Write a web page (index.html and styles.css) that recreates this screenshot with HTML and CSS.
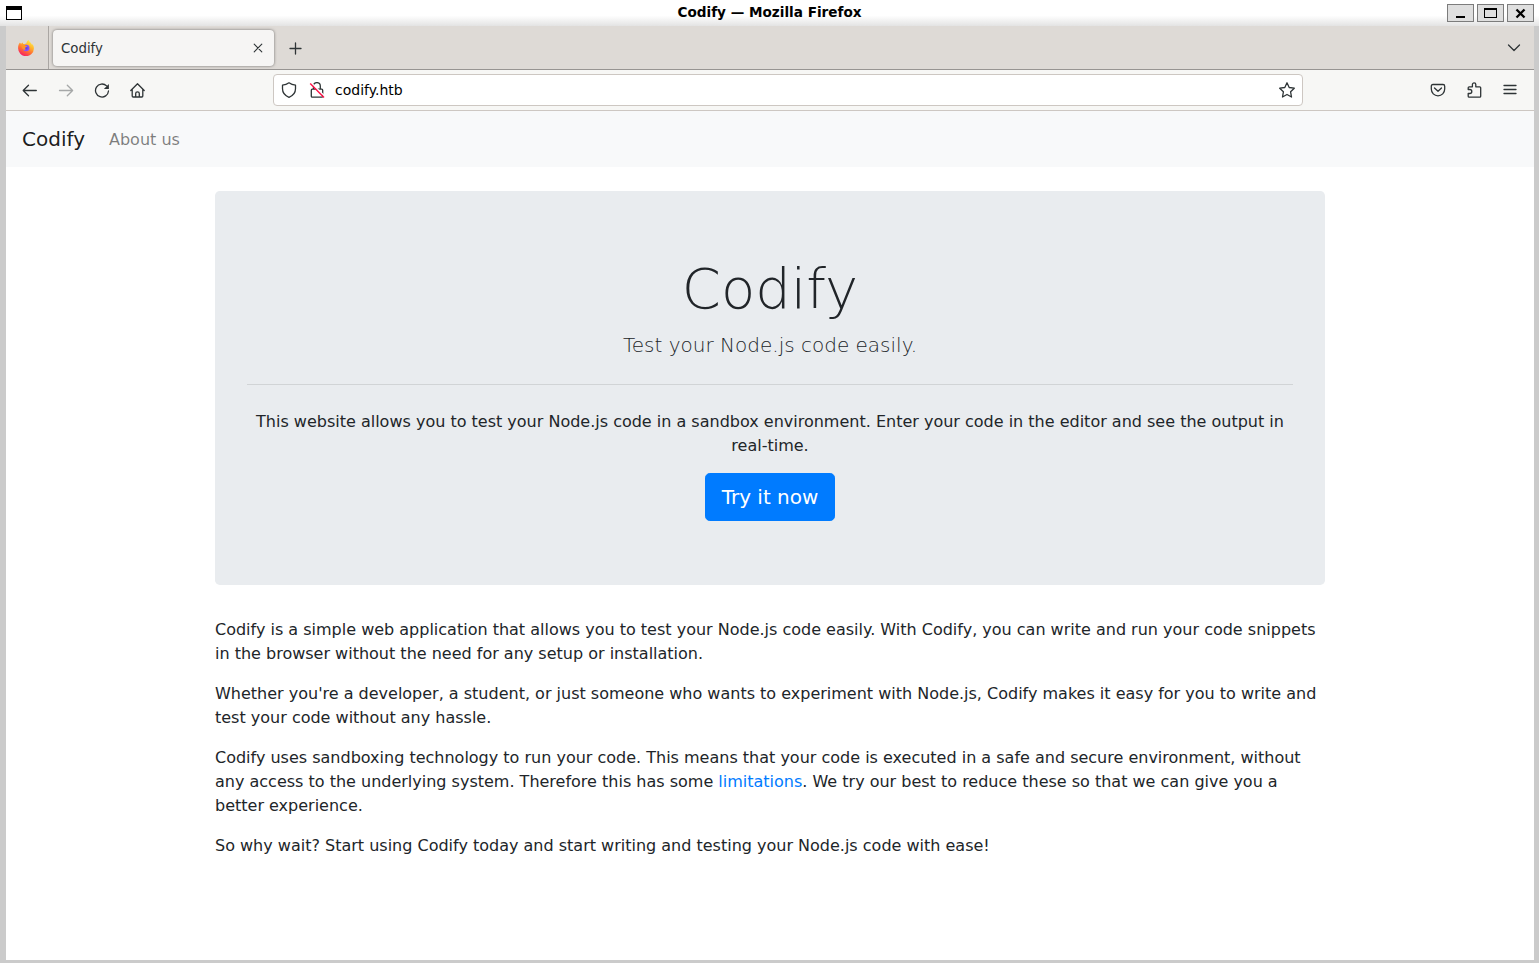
FILE: index.html
```html
<!DOCTYPE html>
<html lang="en">
<head>
<meta charset="utf-8">
<title>Codify</title>
<link rel="stylesheet" href="styles.css">
</head>
<body>
<div class="window">
  <header class="titlebar">
    <svg class="window-menu" width="16" height="14" viewBox="0 0 16 14"><rect width="16" height="14"/><rect x="1" y="4" width="14" height="9" fill="#fff"/></svg>
    <div class="title">Codify — Mozilla Firefox</div>
    <div class="controls">
      <span class="control"><svg width="25" height="16" viewBox="0 0 25 16"><path d="M8 11h9v2H8z"/></svg></span>
      <span class="control"><svg width="25" height="16" viewBox="0 0 25 16"><path d="M6 3h13v10H6zM7 5v7h11V5z" fill-rule="evenodd"/></svg></span>
      <span class="control"><svg width="25" height="16" viewBox="0 0 25 16"><path d="M8.500 4.500l8 8M16.500 4.500l-8 8" stroke="#000" stroke-width="2.300"/></svg></span>
    </div>
  </header>
  <div class="frame">
    <div class="tabs">
      <div class="pinned">
        <svg width="16" height="16" viewBox="0 0 16 16">
          <defs>
            <linearGradient id="flame" x1=".8" y1="0" x2=".25" y2="1"><stop offset="0" stop-color="#fff44f"/><stop offset=".35" stop-color="#ffb52b"/><stop offset=".65" stop-color="#ff6a35"/><stop offset="1" stop-color="#f5156c"/></linearGradient>
            <radialGradient id="globe"><stop offset="0" stop-color="#5b3df0"/><stop offset="1" stop-color="#9059ff"/></radialGradient>
          </defs>
          <path d="M15.500 6c-.4-.9-1.200-1.900-1.800-2.200.3.6.4 1.100.5 1.500C13.300 3 11.600 2.200 10.600 0 8.900 1 8.400 2.600 8.400 3.500c-.9 0-1.700.3-2.400.7-.6-.2-1.100-.7-1.300-1.700-.6.300-1.100.8-1.400 1.300-.7 0-1.100-.5-1.300-1.200C.8 3.800.1 5.600.1 8.100a7.900 7.900 0 0 0 15.800.4c0-.9-.1-1.800-.4-2.500z" fill="url(#flame)"/>
          <circle cx="8.200" cy="8" r="3.300" fill="url(#globe)"/>
          <path d="M3 5.200c1.600-1 3.600-.8 4.700.7h1.600c-.2.900-1.700 1-2 1.500-.3.700-.1 1.600.5 2.200-1.800.6-3.100-.3-3.400-1.400z" fill="#ff9328"/>
        </svg>
      </div>
      <div class="tab"><span>Codify</span><svg width="10" height="10" viewBox="0 0 10 10"><path d="M1.200 1.200l7.600 7.600M8.800 1.200L1.200 8.800" class="line thin"/></svg></div>
      <svg class="new-tab" width="13" height="13" viewBox="0 0 13 13"><path d="M6.500 1v11M1 6.500h11" class="line"/></svg>
      <svg class="all-tabs" width="14" height="8" viewBox="0 0 14 8"><path d="M1.500 1L7 6.500 12.500 1" class="line"/></svg>
    </div>
    <div class="toolbar">
      <div class="nav-buttons">
        <svg width="16" height="16" viewBox="0 0 16 16"><path d="M14.300 8.500H1.200M6.500 3.200L1.200 8.500l5.300 5.300" class="line"/></svg>
        <svg class="disabled" width="16" height="16" viewBox="0 0 16 16"><path d="M1.500 8.500h13M9.300 3.200l5.300 5.300-5.300 5.300" class="line"/></svg>
        <svg width="16" height="16" viewBox="0 0 16 16"><path d="M12.600 3.900A6.500 6.500 0 1 0 14.500 9" class="line"/><path d="M14.900 2v5h-5z" fill="#2e3436"/></svg>
        <svg width="16" height="16" viewBox="0 0 16 16"><path d="M.8 8.500l6.700-6.700 6.700 6.700M2.200 7.200v6.800q0 1 1 1h8.600q1 0 1-1V7.200M5.700 15v-3.500q0-1.600 1.800-1.600t1.800 1.600V15" class="line"/></svg>
      </div>
      <div class="urlbar">
        <svg width="16" height="16" viewBox="0 0 16 16"><path d="M8 .8c2.200 1.500 4.200 2.100 6.500 2.400v3.600c0 3.900-2.700 7-6.500 8.500C4.200 13.800 1.500 10.700 1.500 6.800V3.200C3.800 2.900 5.800 2.300 8 .8z" class="line"/></svg>
        <svg width="16" height="16" viewBox="0 0 16 16"><path d="M4.500 7V4a3.400 3.400 0 0 1 6.800 0v3M3.300 7.200h9.400q1 0 1 1v6q0 1-1 1H3.300q-1 0-1-1v-6q0-1 1-1z" class="line"/><path d="M2.500 1l13.500 13.500" stroke="#fff" stroke-width="1.500"/><path d="M1.200 1.500L15 15.400" stroke="#ff0f45" stroke-width="1.400"/></svg>
        <span class="url">codify.htb</span>
        <svg width="16" height="16" viewBox="0 0 16 16"><path d="M8 .8l2.200 4.700 5.100.7-3.700 3.600.9 5.200L8 12.500 3.500 15l.9-5.200L.7 6.200l5.100-.7z" class="line"/></svg>
      </div>
      <div class="tools">
        <svg width="16" height="16" viewBox="0 0 16 16"><path d="M3 2.500h10q1.700 0 1.700 1.700v2.900a6.700 6.700 0 0 1-13.400 0V4.200Q1.300 2.500 3 2.500zM4.500 6L8 9.300 11.500 6" class="line"/></svg>
        <svg width="16" height="16" viewBox="0 0 16 16"><path d="M2.200 7.500V5.800q0-1 1-1h3.200V2.600a1.700 1.700 0 0 1 3.400 0v2.200h3.900q1 0 1 1v8.400q0 1-1 1H3.200q-1 0-1-1v-2.700h1.600a2 2 0 0 0 0-4z" class="line"/></svg>
        <svg width="16" height="16" viewBox="0 0 16 16"><path d="M2 3.500h12M2 7.500h12M2 11.500h12" class="line"/></svg>
      </div>
    </div>
    <div class="page">
      <nav class="navbar"><a class="brand">Codify</a><a class="nav-link">About us</a></nav>
      <main class="container">
        <section class="jumbotron">
          <h1>Codify</h1>
          <p class="lead">Test your Node.js code easily.</p>
          <hr>
          <p class="intro">This website allows you to test your Node.js code in a sandbox environment. Enter your code in the editor and see the output in real-time.</p>
          <a class="button">Try it now</a>
        </section>
        <p>Codify is a simple web application that allows you to test your Node.js code easily. With Codify, you can write and run your code snippets in the browser without the need for any setup or installation.</p>
        <p>Whether you're a developer, a student, or just someone who wants to experiment with Node.js, Codify makes it easy for you to write and test your code without any hassle.</p>
        <p>Codify uses sandboxing technology to run your code. This means that your code is executed in a safe and secure environment, without any access to the underlying system. Therefore this has some <a class="link">limitations</a>. We try our best to reduce these so that we can give you a better experience.</p>
        <p>So why wait? Start using Codify today and start writing and testing your Node.js code with ease!</p>
      </main>
    </div>
  </div>
</div>
</body>
</html>
```
FILE: styles.css
```css
* { box-sizing: border-box; }
body { margin: 0; font-family: "DejaVu Sans", sans-serif; color: #212529; }
svg { display: block; flex: none; }
.line { fill: none; stroke: #2e3436; stroke-width: 1.3; stroke-linejoin: round; stroke-linecap: round; }
.thin { stroke-width: 1.1; }
.window { height: 963px; display: flex; flex-direction: column; background: #cbcbcb; overflow: hidden; }
.titlebar { height: 26px; flex: none; display: grid; grid-template-columns: 1fr auto 1fr; align-items: center; padding: 0 6px; background: linear-gradient(#fff 60%, #e3e3e3); }
.title { font-size: 13.6px; font-weight: bold; color: #000; line-height: 16px; padding-bottom: 3px; }
.controls { display: flex; justify-content: flex-end; gap: 3px; margin-right: -1px; }
.control { width: 27px; height: 18px; border: 1px solid #7c7c7c; background: #dfdfdf; }
.frame { flex: 1; min-height: 0; margin: 0 5px 3px 6px; display: flex; flex-direction: column; background: #fff; }
.tabs { height: 44px; flex: none; display: flex; align-items: center; background: #dedad6; border-bottom: 1px solid #979492; }
.pinned { width: 43px; height: 43px; border-right: 1px solid #aaa6a3; padding: 14px 0 0 12px; }
.tab { width: 221px; height: 36px; margin-left: 4px; padding: 0 11px 0 8px; border-radius: 4px; background: #f6f5f4; box-shadow: 0 0 3px rgba(0,0,0,.5); display: flex; align-items: center; justify-content: space-between; font-size: 13.33px; line-height: 16px; color: #2e3436; }
.tab span { padding-top: 2px; }
.new-tab { margin: 2px 0 0 15px; }
.all-tabs { margin-left: auto; margin-right: 13px; }
.toolbar { height: 41px; flex: none; display: flex; align-items: center; background: #f7f7f5; border-bottom: 1px solid #cdc7c2; }
.nav-buttons { width: 267px; padding-left: 16px; display: flex; gap: 20px; }
.disabled { opacity: .4; }
.urlbar { width: 1030px; height: 32px; padding: 0 7px; display: flex; align-items: center; gap: 12px; border: 1px solid #cdc7c2; border-radius: 4px; background: #fff; }
.url { flex: 1; font-size: 14px; line-height: 16px; color: #000; margin-left: -2px; }
.tools { flex: 1; padding-right: 16px; display: flex; gap: 20px; justify-content: flex-end; }
.page { font-size: 16px; line-height: 24px; }
.navbar { height: 56px; display: flex; align-items: center; padding: 0 16px; gap: 24px; background: #f8f9fa; }
.brand { font-size: 20px; line-height: 30px; color: rgba(0,0,0,.9); }
.nav-link { padding-top: 2px; color: rgba(0,0,0,.5); }
.container { width: 1140px; margin: 24px auto 0; padding: 0 15px; }
.container p { margin: 0 0 16px; }
.jumbotron { padding: 64px 32px; margin-bottom: 33px; border-radius: 4.8px; background: #e9ecef; text-align: center; }
.jumbotron h1 { margin: 0 0 8px; font-size: 56px; font-weight: 200; line-height: 1.2; }
.jumbotron .lead { font-size: 20px; font-weight: 200; line-height: 30px; }
.jumbotron .intro { margin: 25px 0 15px; }
hr { margin: 24px 0; border: 0; border-top: 1px solid rgba(0,0,0,.1); }
.button { display: inline-block; vertical-align: top; padding: 8px 16px; border: 1px solid #007bff; border-radius: 4.8px; background: #007bff; color: #fff; font-size: 20px; line-height: 30px; }
.link { color: #007bff; }
```
